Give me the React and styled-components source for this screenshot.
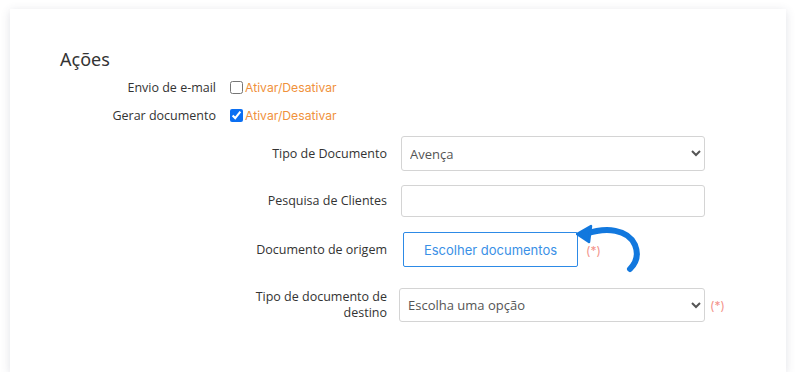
import styled, { createGlobalStyle } from "styled-components";

const GlobalStyle = createGlobalStyle`
    body {
        margin: 0;
        background: #fff;
        font-family: "Open Sans", "Noto Sans", sans-serif;
    }
`

export default function App() {
    return (
        <Page>
            <GlobalStyle/>
            <Card>
                <Heading>Ações</Heading>
                <SwitchRow $mt={6}>
                    <SwitchLabel>Envio de e-mail</SwitchLabel>
                    <Toggle>
                        <input type="checkbox"/>
                        <span>Ativar/Desativar</span>
                    </Toggle>
                </SwitchRow>
                <SwitchRow $mt={8}>
                    <SwitchLabel>Gerar documento</SwitchLabel>
                    <Toggle>
                        <input type="checkbox" defaultChecked/>
                        <span>Ativar/Desativar</span>
                    </Toggle>
                </SwitchRow>
                <FieldRow $mt={11}>
                    <FieldLabel>Tipo de Documento</FieldLabel>
                    <Select $h={35} defaultValue="avenca">
                        <option value="avenca">Avença</option>
                    </Select>
                </FieldRow>
                <FieldRow $mt={14}>
                    <FieldLabel>Pesquisa de Clientes</FieldLabel>
                    <Input type="text"/>
                </FieldRow>
                <FieldRow $mt={15}>
                    <FieldLabel>Documento de origem</FieldLabel>
                    <ButtonCell>
                        <ChooseButton>Escolher documentos</ChooseButton>
                        <Required>(*)</Required>
                        <Arrow width="70" height="56" viewBox="0 0 70 56">
                            <path d="M10 14 C 30 7, 52 9, 59 25 C 63 35, 60 43, 54 49"
                                fill="none" stroke="#1278de" strokeWidth="6" strokeLinecap="round"/>
                            <path d="M1 14 L 15 6 L 13 22 Z" fill="#1278de" stroke="#1278de"
                                strokeWidth="2.5" strokeLinejoin="round"/>
                        </Arrow>
                    </ButtonCell>
                </FieldRow>
                <FieldRow $mt={21} $shift={-2}>
                    <FieldLabel>Tipo de documento de<br/>destino</FieldLabel>
                    <SelectCell>
                        <Select $h={34} $w={306} defaultValue="">
                            <option value="">Escolha uma opção</option>
                        </Select>
                        <Required>(*)</Required>
                    </SelectCell>
                </FieldRow>
            </Card>
        </Page>
    )
}

const Page = styled.div`
    padding: 9px 14px 0 10px;
`
const Card = styled.section`
    height: 363px;
    box-sizing: border-box;
    padding: 38px 50px 0;
    background: #fff;
    box-shadow: 0 2px 9px rgba(60, 70, 100, 0.16);
    display: flex;
    flex-direction: column;
`
const Heading = styled.h2`
    margin: 0;
    font-family: "Noto Sans", "Open Sans", sans-serif;
    font-size: 18px;
    font-weight: 400;
    line-height: 24px;
    color: #333;
`
const SwitchRow = styled.div`
    display: grid;
    grid-template-columns: 156px auto;
    column-gap: 14px;
    align-items: center;
    height: 20px;
    margin-top: ${p => p.$mt}px;
`
const SwitchLabel = styled.label`
    text-align: right;
    font-size: 12.5px;
    color: #333;
`
const Toggle = styled.label`
    display: flex;
    align-items: center;
    font-family: "Inter", "Lato", sans-serif;
    font-size: 12.2px;
    color: #f0913c;
    input {
        margin: 0 2px 0 0;
        width: 13px;
        height: 13px;
        accent-color: #0b6ff2;
    }
`
const FieldRow = styled.div`
    display: grid;
    grid-template-columns: 327px auto;
    column-gap: ${p => 14 + (p.$shift || 0)}px;
    align-items: center;
    margin-top: ${p => p.$mt}px;
`
const FieldLabel = styled.label`
    text-align: right;
    font-size: 12.5px;
    line-height: 16px;
    color: #333;
`
const Select = styled.select`
    width: ${p => p.$w || 304}px;
    height: ${p => p.$h}px;
    box-sizing: border-box;
    border: 1px solid #d4d4d4;
    border-radius: 3px;
    background: #fff;
    padding: 0 4px;
    font-family: "Open Sans", sans-serif;
    font-size: 13px;
    color: #555;
`
const Input = styled.input`
    width: 304px;
    height: 32px;
    box-sizing: border-box;
    border: 1px solid #d4d4d4;
    border-radius: 3px;
    padding: 0 6px;
    font-size: 13px;
`
const ButtonCell = styled.div`
    position: relative;
    display: flex;
    align-items: center;
    gap: 8px;
    padding-left: 2px;
`
const SelectCell = styled.div`
    display: flex;
    align-items: center;
    gap: 5px;
`
const ChooseButton = styled.button`
    width: 175px;
    height: 35px;
    border: 1px solid #2d8ae6;
    border-radius: 2px;
    background: #fff;
    color: #3a90e6;
    font-family: "Inter", "Lato", sans-serif;
    font-size: 13px;
    cursor: pointer;
`
const Required = styled.span`
    font-family: "Inter", "Lato", sans-serif;
    font-size: 12px;
    color: #f3938a;
    padding-top: 1px;
`
const Arrow = styled.svg`
    position: absolute;
    left: 175px;
    top: -12px;
`
